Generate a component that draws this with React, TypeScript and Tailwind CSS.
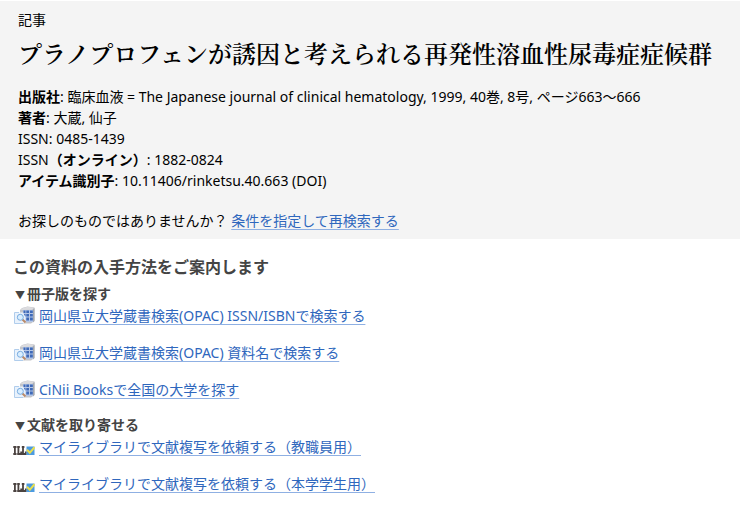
import React from 'react';

interface ServiceLink {
    label: string;
}

const CATALOG_LINKS: ServiceLink[] = [
    { label: '岡山県立大学蔵書検索(OPAC) ISSN/ISBNで検索する' },
    { label: '岡山県立大学蔵書検索(OPAC) 資料名で検索する' },
    { label: 'CiNii Booksで全国の大学を探す' },
];

const COPY_LINKS: ServiceLink[] = [
    { label: 'マイライブラリで文献複写を依頼する（教職員用）' },
    { label: 'マイライブラリで文献複写を依頼する（本学学生用）' },
];

const CatalogIcon: React.FC = () => (
    <svg width="21" height="19" viewBox="0 0 21 19" aria-hidden="true">
        <path d="M6 4 L8 2 L13.5 0.5 L20.5 1.5 V15 L17 17.5 H6 Z" fill="#c3c5ca" />
        <path d="M6.5 4 L9 2 L13.5 0.8 L20 1.8 L18 3.8 Z" fill="#dcdcdf" />
        <path d="M19 3.5 L20.5 2 V15 L19 16.5 Z" fill="#a4a8b0" />
        <rect x="9" y="4" width="10" height="12" fill="#b4c6e6" />
        <path
            d="M9.5 4.5h2v2.5h-2z M12.3 4.5h2.7v2.5h-2.7z M16 4.5h2.8v2.5h-2.8z M10 8h1.5v2.5h-1.5z M12.3 8h2.7v2.5h-2.7z M16 8h2.8v2.5h-2.8z M12.3 11.5h2.7v3h-2.7z M16 11.5h2.8v3h-2.8z"
            fill="#3f6ab8"
        />
        <path d="M0.5 6.5 H9 L11.5 11 V17 H0.5 Z" fill="#e9f2fc" />
        <path d="M5 6.5 H0.5 V17.5 H9" fill="none" stroke="#b0cdec" />
        <path d="M8.5 13.5 L11.5 16.5" stroke="#b98a68" strokeWidth="2" />
        <circle cx="6.3" cy="11.3" r="3" fill="#d9eeff" stroke="#79ace0" />
    </svg>
);

const CopyIcon: React.FC = () => (
    <svg width="22" height="9" viewBox="0 0 22 9" aria-hidden="true">
        <path
            d="M0.3 1h3.2 M1.9 1v7 M0.3 8h3.2 M5.4 1v7 M4.2 1h2.6 M4.2 8h4v-2.5 M10 1v7 M8.8 1h2.6 M8.8 8h4v-2.5"
            fill="none"
            stroke="#4b4340"
            strokeWidth="1.8"
        />
        <rect x="13.5" y="0.5" width="8" height="8.5" fill="#4c9be0" />
        <path d="M14 3.8 L16.8 6.8 L21.5 1.2" fill="none" stroke="#eadf4c" strokeWidth="2" />
    </svg>
);

const TextLink: React.FC<{ children: React.ReactNode }> = ({ children }) => (
    <a href="#" className="text-[#2f67bd] underline decoration-[#8fb0e3] decoration-1 underline-offset-3">
        {children}
    </a>
);

const GroupTitle: React.FC<{ children: React.ReactNode; className: string }> = ({ children, className }) => (
    <h3 className={`font-bold ${className}`}>
        <span className="inline-block w-[14px] text-center text-[10px] leading-none">▼</span>
        {children}
    </h3>
);

const LinkList: React.FC<{ links: ServiceLink[]; icon: React.ReactNode }> = ({ links, icon }) => (
    <ul className="mt-px flex flex-col gap-4">
        {links.map((link) => (
            <li key={link.label} className="flex h-[21px] items-center gap-1">
                {icon}
                <TextLink>{link.label}</TextLink>
            </li>
        ))}
    </ul>
);

export default function App() {
    return (
        <main
            lang="ja"
            className="bg-white font-['Noto_Sans','Noto_Sans_CJK_JP',sans-serif] text-[14px] leading-[21px] text-black"
        >
            <header className="mt-px bg-[#f4f4f4] px-[18px] pt-2 pb-2">
                <p>記事</p>
                <h1 className="mt-[6px] font-['Noto_Serif_CJK_JP','Noto_Serif_JP',serif] text-[24px] leading-[34px] font-semibold whitespace-nowrap">
                    プラノプロフェンが誘因と考えられる再発性溶血性尿毒症症候群
                </h1>
                <div className="mt-4">
                    <p><b>出版社</b>: 臨床血液 = The Japanese journal of clinical hematology, 1999, 40巻, 8号, ページ663～666</p>
                    <p><b>著者</b>: 大蔵, 仙子</p>
                    <p>ISSN: 0485-1439</p>
                    <p>ISSN<b>（オンライン）</b>: 1882-0824</p>
                    <p><b>アイテム識別子</b>: 10.11406/rinketsu.40.663 (DOI)</p>
                </div>
                <p className="mt-[19px]">
                    お探しのものではありませんか？ <TextLink>条件を指定して再検索する</TextLink>
                </p>
            </header>
            <section className="px-[13px] pt-4 pb-3 text-[#444]">
                <h2 className="text-[16px] leading-6 font-bold">この資料の入手方法をご案内します</h2>
                <GroupTitle className="mt-1">冊子版を探す</GroupTitle>
                <LinkList
                    links={CATALOG_LINKS}
                    icon={<span className="flex h-full w-[22px] shrink-0 items-center justify-end"><CatalogIcon /></span>}
                />
                <GroupTitle className="mt-[14px]">文献を取り寄せる</GroupTitle>
                <LinkList
                    links={COPY_LINKS}
                    icon={<span className="flex h-full w-[22px] shrink-0 items-end pb-[2px]"><CopyIcon /></span>}
                />
            </section>
        </main>
    );
}
